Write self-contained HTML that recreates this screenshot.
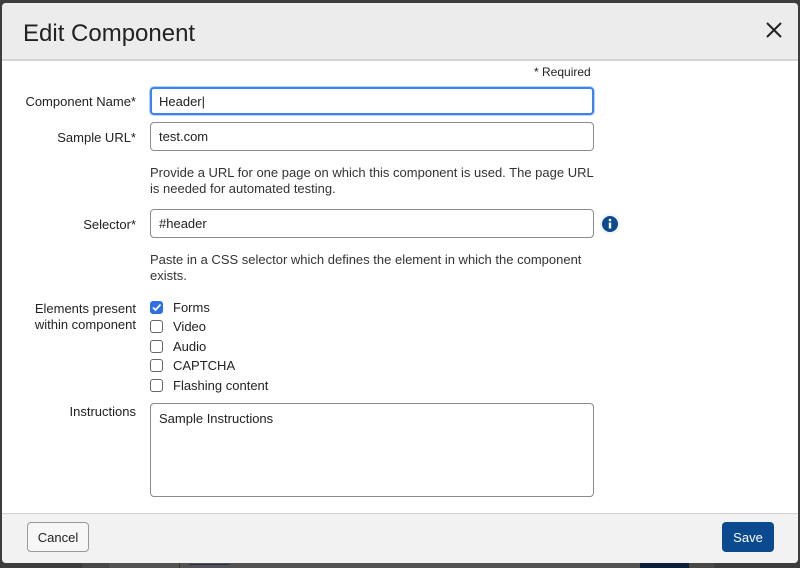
<!DOCTYPE html>
<html><head><style>
body{margin:0;width:800px;height:568px;background:#3d3d3d;position:relative;overflow:hidden;font-family:"Liberation Sans",Arial,sans-serif;color:#222}
.a{position:absolute}
.modal{position:absolute;left:2px;top:3px;width:796px;height:560px;background:#fff;border-radius:4px;overflow:hidden}
.hdr{position:absolute;left:0;top:0;width:796px;height:56px;background:#ececec;border-bottom:2px solid #d4d4d4}
.hdr h1{position:absolute;left:21px;top:17px;margin:0;font-weight:normal;font-size:24px;color:#222}
.x{position:absolute;left:763px;top:18px}
.lbl{position:absolute;right:662px;font-size:13px;text-align:right;color:#222;line-height:16px}
.inp{position:absolute;left:148px;width:444px;border:1px solid #8a8a8a;border-radius:4px;font-size:13px;box-sizing:border-box;padding-left:8px;background:#fff}
.help{position:absolute;left:148px;font-size:13px;line-height:16px;color:#333;width:450px}
.cb{position:absolute;left:148px;width:13px;height:13px;border:1px solid #666;border-radius:3px;box-sizing:border-box;background:#fff}
.ct{position:absolute;left:171px;font-size:13px}
.ftr{position:absolute;left:0;top:510px;width:796px;height:50px;background:#f2f2f2;border-top:1px solid #d0d0d0}
.btn{position:absolute;top:8px;height:30px;border-radius:4px;font-size:13px;line-height:30px;text-align:center;box-sizing:border-box}
</style></head><body>
<div class="a" style="left:82px;top:555px;width:632px;height:13px;background:#474747"></div>
<div class="a" style="left:109px;top:555px;width:580px;height:13px;background:#535353"></div>
<div class="a" style="left:119px;top:551px;font-size:13px;color:#111">Previous</div>
<div class="a" style="left:179px;top:555px;width:1px;height:13px;background:#333"></div>
<div class="a" style="left:189px;top:551px;font-size:13px;color:#1a2f55;text-decoration:underline">Cancel</div>
<div class="a" style="left:640px;top:555px;width:49px;height:13px;background:#0b1f36"></div>
<div class="modal">
<div class="hdr"><h1>Edit Component</h1>
<svg class="x" width="18" height="18" viewBox="0 0 18 18"><path d="M2 2L16 16M16 2L2 16" stroke="#222" stroke-width="2"/></svg></div>
<div class="a" style="left:532px;top:62px;font-size:12px">* Required</div>
<div class="lbl" style="top:91px">Component Name*</div>
<div class="inp" style="top:84px;height:28px;line-height:26px;border:2px solid #3b82f6;box-shadow:0 0 0 1px #bcd3f7;padding-left:7px">Header|</div>
<div class="lbl" style="top:127px">Sample URL*</div>
<div class="inp" style="top:119px;height:29px;line-height:28px">test.com</div>
<div class="help" style="top:162px">Provide a URL for one page on which this component is used. The page URL<br>is needed for automated testing.</div>
<div class="lbl" style="top:214px">Selector*</div>
<div class="inp" style="top:206px;height:29px;line-height:28px">#header</div>
<svg class="a" style="left:597px;top:210px" width="22" height="22" viewBox="0 0 22 22"><circle cx="11" cy="11" r="10.5" fill="#f4f4f4"/><circle cx="11" cy="11" r="8" fill="#0b4a8f"/><circle cx="11" cy="7" r="1.3" fill="#fff"/><rect x="9.8" y="9.5" width="2.4" height="6" fill="#fff"/></svg>
<div class="help" style="top:249px">Paste in a CSS selector which defines the element in which the component<br>exists.</div>
<div class="lbl" style="top:298px">Elements present<br>within component</div>
<div class="cb" style="top:298px;background:#2f6fe4;border-color:#2f6fe4"><svg width="11" height="11" viewBox="0 0 11 11" style="position:absolute;left:0;top:0"><path d="M2 5.5L4.5 8L9.5 2.5" stroke="#fff" stroke-width="1.8" fill="none"/></svg></div>
<div class="ct" style="top:297px">Forms</div>
<div class="cb" style="top:317px"></div><div class="ct" style="top:316px">Video</div>
<div class="cb" style="top:337px"></div><div class="ct" style="top:336px">Audio</div>
<div class="cb" style="top:356px"></div><div class="ct" style="top:355px">CAPTCHA</div>
<div class="cb" style="top:376px"></div><div class="ct" style="top:375px">Flashing content</div>
<div class="lbl" style="top:401px">Instructions</div>
<div class="inp" style="top:400px;height:94px;padding-top:7px">Sample Instructions</div>
<div class="ftr">
<div class="btn" style="left:25px;width:62px;border:1px solid #999;background:#f7f7f7">Cancel</div>
<div class="btn" style="left:720px;width:52px;background:#0b4a8f;color:#fff;line-height:32px">Save</div>
</div>
</div>
</body></html>
